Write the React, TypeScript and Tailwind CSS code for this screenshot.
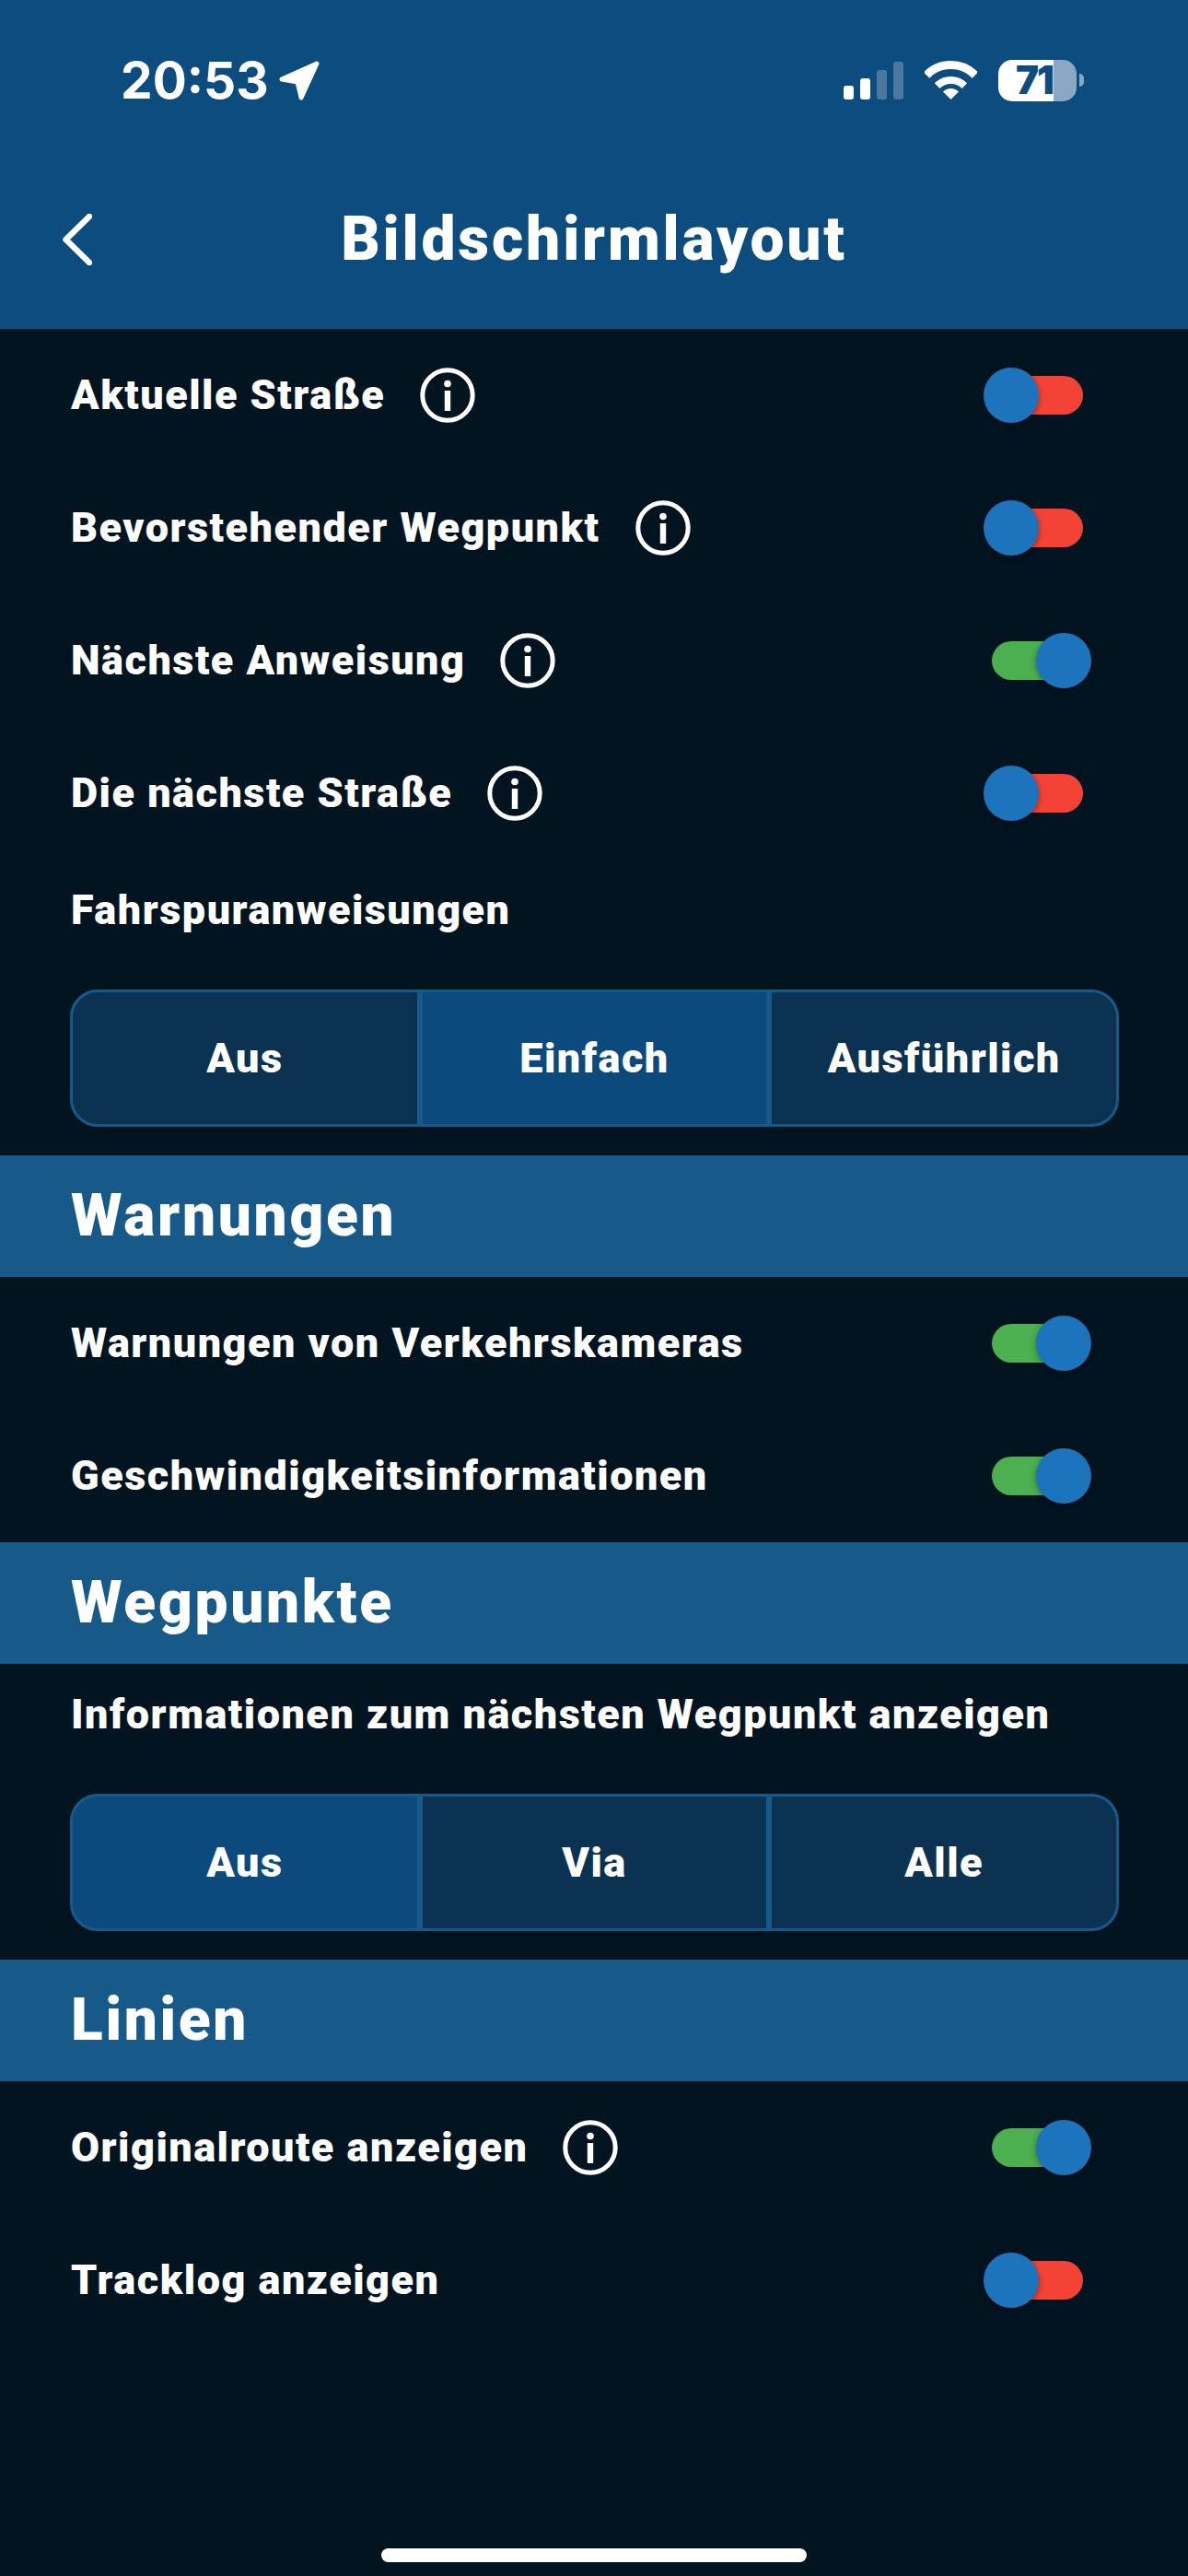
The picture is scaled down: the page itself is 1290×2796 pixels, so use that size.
import React from "react";

const rowText = "text-[45px] font-black text-white tracking-[1.5px] leading-none whitespace-nowrap";

const InfoIcon = () => (
    <svg width="60" height="60" viewBox="0 0 60 60" fill="none" className="shrink-0">
        <circle cx="30" cy="30" r="27.2" stroke="white" strokeWidth="5" />
        <circle cx="30" cy="17.5" r="3.8" fill="white" />
        <rect x="26.8" y="25" width="6.4" height="22" fill="white" />
    </svg>
);

const Toggle = ({ on }: { on: boolean }) => (
    <div className={`relative w-[99px] h-[42px] rounded-full ${on ? "bg-[#4caf50]" : "bg-[#f44336]"}`}>
        <div
            className={`absolute top-[-9px] w-[60px] h-[60px] rounded-full bg-[#1c75bc] shadow-[0_2px_6px_rgba(0,0,0,0.4)] ${
                on ? "right-[-9px]" : "left-[-9px]"
            }`}
        />
    </div>
);

const Row = ({ label, info, on }: { label: string; info?: boolean; on: boolean }) => (
    <div className="h-[144px] flex items-center justify-between pl-[77px] pr-[114px]">
        <div className="flex items-center gap-[38px]">
            <span className={`${rowText} pb-[2px]`}>{label}</span>
            {info && <InfoIcon />}
        </div>
        <Toggle on={on} />
    </div>
);

const Label = ({ children }: { children: string }) => (
    <div className={`h-[110px] pl-[77px] pb-[2px] flex items-center ${rowText}`}>{children}</div>
);

const Segmented = ({ options, active }: { options: string[]; active: number }) => (
    <div className="ml-[76px] mr-[75px] mt-[31px] mb-[31px] h-[149px] flex gap-[6px] bg-[#175a8a] border-[3px] border-[#175a8a] rounded-[30px] overflow-hidden">
        {options.map((o, i) => (
            <div
                key={o}
                className={`flex-1 flex items-center justify-center ${rowText} ${
                    i === active ? "bg-[#0c4a7e]" : "bg-[#0b3250]"
                }`}
            >
                {o}
            </div>
        ))}
    </div>
);

const Section = ({ title }: { title: string }) => (
    <div className="h-[132px] bg-[#175a8a] flex items-center pl-[77px] text-[64px] font-black text-white tracking-[2.7px] leading-none">
        {title}
    </div>
);

const StatusBar = () => (
    <div className="h-[174px] flex items-center justify-between pl-[131px] pr-[113px]">
        <div className="flex items-center gap-[11px]">
            <span className="font-['Inter',sans-serif] text-[55px] font-bold text-white leading-none">20:53</span>
            <svg width="44" height="43" viewBox="0 0 44 43" fill="white" stroke="white" strokeWidth="5" strokeLinejoin="round">
                <path d="M3 20 L41 3 L24 40 L20 23 Z" />
            </svg>
        </div>
        <div className="flex items-center">
            <svg width="65" height="41" viewBox="0 0 65 41" fill="white" className="mr-[23px]">
                <rect x="0" y="26" width="11" height="15" rx="3" />
                <rect x="18" y="18" width="11" height="23" rx="3" />
                <rect x="36" y="9" width="11" height="32" rx="3" opacity="0.25" />
                <rect x="54" y="0" width="11" height="41" rx="3" opacity="0.25" />
            </svg>
            <svg width="57" height="42" viewBox="0 0 57 42" fill="none" className="mr-[23px]">
                <path d="M2 15.5 A37.5 37.5 0 0 1 55 15.5" stroke="white" strokeWidth="9" />
                <path d="M13.65 27.15 A21 21 0 0 1 43.35 27.15" stroke="white" strokeWidth="8" />
                <path d="M28.5 42 L20 33.5 A12 12 0 0 1 37 33.5 Z" fill="white" />
            </svg>
            <div className="w-[85px] h-[45px] rounded-[15px] bg-[linear-gradient(90deg,#ffffff_71%,#8aa8c4_71%)] flex items-center pl-[19px]">
                <span className="font-['Inter',sans-serif] text-[42px] font-black text-[#0d4c7f] leading-none tracking-[-2px]">71</span>
            </div>
            <div className="w-[5px] h-[14px] ml-[3px] rounded-r-full bg-[#8aa8c4]" />
        </div>
    </div>
);

export default function App() {
    return (
        <div className="w-[1290px] h-[2796px] bg-[#031421] flex flex-col font-['Roboto',sans-serif] overflow-hidden">
            {/* header */}
            <div className="h-[357px] bg-[#0d4c7f] shrink-0">
                <StatusBar />
                <div className="grid grid-cols-[1fr_auto_1fr] items-center h-[172px] px-[68px]">
                    <svg width="32" height="56" viewBox="0 0 32 56" fill="none" stroke="white" strokeWidth="6.5" strokeLinecap="round" strokeLinejoin="round">
                        <path d="M29 3 L3.5 28 L29 53" />
                    </svg>
                    <div className="text-[66px] font-black text-white tracking-[2.8px] leading-none">Bildschirmlayout</div>
                    <div />
                </div>
            </div>

            <Row label="Aktuelle Straße" info on={false} />
            <Row label="Bevorstehender Wegpunkt" info on={false} />
            <Row label="Nächste Anweisung" info on />
            <Row label="Die nächste Straße" info on={false} />
            <Label>Fahrspuranweisungen</Label>
            <Segmented options={["Aus", "Einfach", "Ausführlich"]} active={1} />

            <Section title="Warnungen" />
            <Row label="Warnungen von Verkehrskameras" on />
            <Row label="Geschwindigkeitsinformationen" on />

            <Section title="Wegpunkte" />
            <Label>Informationen zum nächsten Wegpunkt anzeigen</Label>
            <Segmented options={["Aus", "Via", "Alle"]} active={0} />

            <Section title="Linien" />
            <Row label="Originalroute anzeigen" info on />
            <Row label="Tracklog anzeigen" on={false} />

            {/* home indicator */}
            <div className="mt-auto mb-[15px] mx-auto w-[462px] h-[15px] rounded-full bg-white" />
        </div>
    );
}
